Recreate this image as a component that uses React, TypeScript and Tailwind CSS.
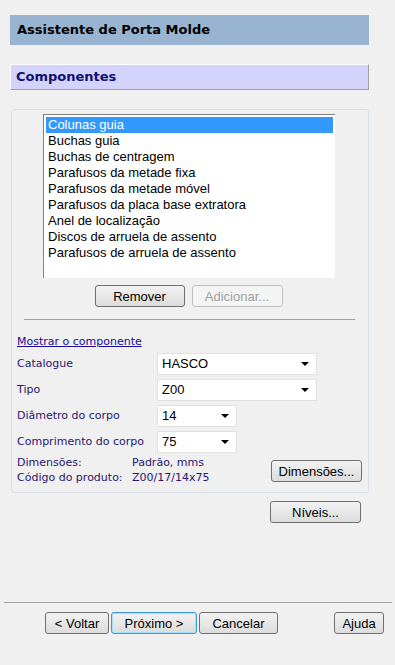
import React from 'react'

const items = [
  'Colunas guia',
  'Buchas guia',
  'Buchas de centragem',
  'Parafusos da metade fixa',
  'Parafusos da metade móvel',
  'Parafusos da placa base extratora',
  'Anel de localização',
  'Discos de arruela de assento',
  'Parafusos de arruela de assento',
]

const verdana = "font-['Verdana','DejaVu_Sans',sans-serif]"
const arial = "font-['Liberation_Sans',Arial,sans-serif]"

function Button({
  children,
  className = '',
  disabled = false,
  focused = false,
}: {
  children: React.ReactNode
  className?: string
  disabled?: boolean
  focused?: boolean
}) {
  return (
    <button
      className={`h-[22px] rounded-[3px] border text-[13px] leading-none ${arial} flex items-center justify-center
        ${disabled
          ? 'border-[#bfbfbf] bg-[#f4f4f4] text-[#a0a0a0]'
          : focused
            ? 'border-[#3c9bd6] bg-gradient-to-b from-[#f2f2f2] to-[#dcdcdc] text-black shadow-[inset_0_0_0_1px_#a8e0f7]'
            : 'border-[#707070] bg-gradient-to-b from-[#f2f2f2] to-[#dcdcdc] text-black'
        } ${className}`}
    >
      {children}
    </button>
  )
}

function Select({ value, className = '' }: { value: string; className?: string }) {
  return (
    <div
      className={`h-[22px] bg-white border border-[#e1e1e1] flex items-center justify-between pl-[4px] pr-[7px] text-[13px] ${arial} text-black ${className}`}
    >
      <span>{value}</span>
      <svg width="8" height="4" viewBox="0 0 8 4">
        <path d="M0 0h8L4 4z" fill="#000" />
      </svg>
    </div>
  )
}

function FieldRow({ label, children }: { label: string; children: React.ReactNode }) {
  return (
    <div className="flex items-center h-[22px]">
      <span className={`w-[140px] text-[11px] text-[#2a1570] ${verdana}`}>{label}</span>
      {children}
    </div>
  )
}

export default function App() {
  return (
    <div className="w-[395px] h-[665px] bg-[#f0f0f0] flex flex-col overflow-hidden">
      {/* Title bar */}
      <div className="mt-[15px] ml-[10px] w-[359px] h-[30px] bg-[#98b4d0] flex items-center pl-[7px]">
        <span className={`text-[13px] font-bold text-black ${verdana}`}>Assistente de Porta Molde</span>
      </div>

      {/* Section header */}
      <div className="mt-[19px] ml-[10px] w-[359px] h-[26px] bg-[#d3d3fb] border-t border-l border-white border-r border-b border-r-[#a0a0a0] border-b-[#a0a0a0] flex items-center pl-[5px]">
        <span className={`text-[13px] font-bold text-[#10106e] ${verdana}`}>Componentes</span>
      </div>

      {/* Panel */}
      <div className="mt-[19px] ml-[11px] w-[358px] h-[384px] border border-[#d9dfe6] rounded-[3px] flex flex-col">
        <div className="mt-[4px] ml-[31px] w-[292px] h-[164px] bg-white border-t border-l border-[#828282] p-[2px]">
          {items.map((item, i) => (
            <div
              key={item}
              className={`h-[16px] flex items-center pl-[2px] text-[13px] ${arial} ${
                i === 0 ? 'bg-[#3399ff] text-white' : 'text-black'
              }`}
            >
              {item}
            </div>
          ))}
        </div>

        <div className="mt-[7px] flex justify-center gap-[7px] pr-[3px]">
          <Button className="w-[90px]">Remover</Button>
          <Button className="w-[91px]" disabled>
            Adicionar...
          </Button>
        </div>

        <div className="mt-[12px] ml-[12px] w-[331px] h-px bg-[#a0a0a0]" />

        <div className="pl-[5px] pr-[4px] mt-[13px]">
          <div className="h-[18px] flex items-center">
            <span className={`text-[11px] underline text-[#1a0a9a] ${verdana}`}>Mostrar o componente</span>
          </div>

          <div className="mt-[2px] flex flex-col gap-[4px]">
            <FieldRow label="Catalogue">
              <Select value="HASCO" className="w-[160px]" />
            </FieldRow>
            <FieldRow label="Tipo">
              <Select value="Z00" className="w-[160px]" />
            </FieldRow>
            <FieldRow label="Diâmetro do corpo">
              <Select value="14" className="w-[80px]" />
            </FieldRow>
            <FieldRow label="Comprimento do corpo">
              <Select value="75" className="w-[80px]" />
            </FieldRow>
          </div>

          <div className="mt-[3px] flex items-center justify-between">
            <div className={`grid grid-cols-[115px_auto] gap-y-[2px] text-[11px] text-[#2a1570] leading-[13px] ${verdana}`}>
              <span>Dimensões:</span>
              <span>Padrão, mms</span>
              <span>Código do produto:</span>
              <span>Z00/17/14x75</span>
            </div>
            <Button className="w-[91px] mr-[2px] mt-[2px]">Dimensões...</Button>
          </div>
        </div>
      </div>

      <div className="mt-[8px] ml-[270px]">
        <Button className="w-[91px]">Níveis...</Button>
      </div>

      <div className="mt-[79px] ml-[4px] w-[388px] h-px bg-[#a0a0a0]" />

      <div className="mt-[9px] flex items-center">
        <Button className="ml-[45px] w-[64px]">&lt; Voltar</Button>
        <Button className="ml-[2px] w-[86px]" focused>
          Próximo &gt;
        </Button>
        <Button className="ml-[2px] w-[79px]">Cancelar</Button>
        <Button className="ml-[56px] w-[50px]">Ajuda</Button>
      </div>
    </div>
  )
}
